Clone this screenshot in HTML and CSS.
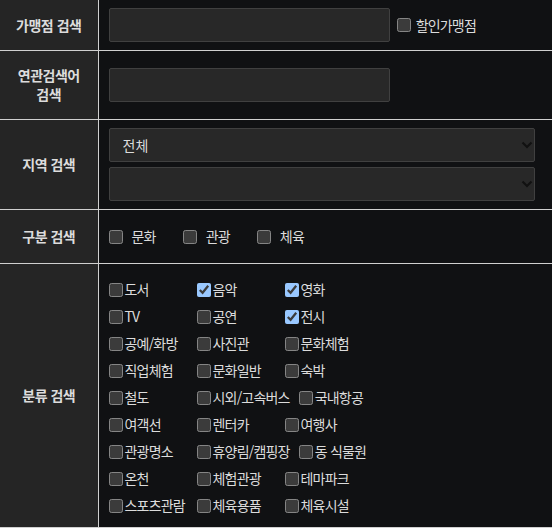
FILE: index.html
```html
<!DOCTYPE html>
<html lang="ko">
<head>
    <meta charset="UTF-8">
    <meta name="viewport" content="width=device-width, initial-scale=1.0">
    <title>가맹점 검색</title>
    <link rel="stylesheet" href="styles.css">
</head>
<body>
    <table class="search-table">
        <tr>
            <th>가맹점 검색</th>
            <td>
                <input type="text" class="text-input">
                <label class="check-inline discount">
                    <input type="checkbox"> 할인가맹점
                </label>
            </td>
        </tr>
        <tr>
            <th>연관검색어<br>검색</th>
            <td>
                <input type="text" class="text-input">
            </td>
        </tr>
        <tr>
            <th>지역 검색</th>
            <td class="region-cell">
                <div class="select-wrap">
                    <select class="select-box">
                        <option>전체</option>
                    </select>
                    <svg class="select-arrow" width="12" height="8" viewBox="0 0 12 8">
                        <path d="M1.5 1.5 L6 6 L10.5 1.5" fill="none" stroke="#111" stroke-width="2.2"/>
                    </svg>
                </div>
                <div class="select-wrap">
                    <select class="select-box">
                        <option></option>
                    </select>
                    <svg class="select-arrow" width="12" height="8" viewBox="0 0 12 8">
                        <path d="M1.5 1.5 L6 6 L10.5 1.5" fill="none" stroke="#111" stroke-width="2.2"/>
                    </svg>
                </div>
            </td>
        </tr>
        <tr>
            <th>구분 검색</th>
            <td class="type-cell">
                <div class="type-list">
                    <label class="type-item"><input type="checkbox">문화</label>
                    <label class="type-item"><input type="checkbox">관광</label>
                    <label class="type-item"><input type="checkbox">체육</label>
                </div>
            </td>
        </tr>
        <tr>
            <th>분류 검색</th>
            <td class="category-cell">
                <div class="cat-row">
                    <label class="cat-item"><input type="checkbox">도서</label>
                    <label class="cat-item"><input type="checkbox" checked>음악</label>
                    <label class="cat-item"><input type="checkbox" checked>영화</label>
                </div>
                <div class="cat-row">
                    <label class="cat-item"><input type="checkbox">TV</label>
                    <label class="cat-item"><input type="checkbox">공연</label>
                    <label class="cat-item"><input type="checkbox" checked>전시</label>
                </div>
                <div class="cat-row">
                    <label class="cat-item"><input type="checkbox">공예/화방</label>
                    <label class="cat-item"><input type="checkbox">사진관</label>
                    <label class="cat-item"><input type="checkbox">문화체험</label>
                </div>
                <div class="cat-row">
                    <label class="cat-item"><input type="checkbox">직업체험</label>
                    <label class="cat-item"><input type="checkbox">문화일반</label>
                    <label class="cat-item"><input type="checkbox">숙박</label>
                </div>
                <div class="cat-row">
                    <label class="cat-item"><input type="checkbox">철도</label>
                    <label class="cat-item"><input type="checkbox">시외/고속버스</label>
                    <label class="cat-item"><input type="checkbox">국내항공</label>
                </div>
                <div class="cat-row">
                    <label class="cat-item"><input type="checkbox">여객선</label>
                    <label class="cat-item"><input type="checkbox">렌터카</label>
                    <label class="cat-item"><input type="checkbox">여행사</label>
                </div>
                <div class="cat-row">
                    <label class="cat-item"><input type="checkbox">관광명소</label>
                    <label class="cat-item"><input type="checkbox">휴양림/캠핑장</label>
                    <label class="cat-item"><input type="checkbox">동 식물원</label>
                </div>
                <div class="cat-row">
                    <label class="cat-item"><input type="checkbox">온천</label>
                    <label class="cat-item"><input type="checkbox">체험관광</label>
                    <label class="cat-item"><input type="checkbox">테마파크</label>
                </div>
                <div class="cat-row">
                    <label class="cat-item"><input type="checkbox">스포츠관람</label>
                    <label class="cat-item"><input type="checkbox">체육용품</label>
                    <label class="cat-item"><input type="checkbox">체육시설</label>
                </div>
            </td>
        </tr>
    </table>
</body>
</html>
```

FILE: styles.css
```css
* {
    box-sizing: border-box;
    margin: 0;
    padding: 0;
}

:root {
    color-scheme: dark;
}

body {
    font-family: "Noto Sans CJK KR", "Noto Sans", sans-serif;
    font-size: 14px;
    letter-spacing: -0.8px;
    background-color: #101113;
    color: #dcdcdc;
}

.search-table {
    width: 552px;
    border-collapse: collapse;
}

.search-table th,
.search-table td {
    border-bottom: 1px solid #d0d0d0;
    vertical-align: middle;
}

.search-table th {
    width: 98px;
    padding: 15px 4px;
    background-color: #252525;
    border-right: 1px solid #d0d0d0;
    font-weight: 700;
    line-height: 19px;
    letter-spacing: -0.5px;
    text-align: center;
    color: #dcdcdc;
}

.search-table td {
    padding: 8px 10px;
    background-color: #101113;
}

input[type="checkbox"] {
    width: 14px;
    height: 14px;
    margin: 0;
    flex-shrink: 0;
}

.text-input {
    display: inline-block;
    width: 281px;
    height: 34px;
    background-color: #282828;
    border: 1px solid #404040;
    border-radius: 2px;
    color: #dcdcdc;
    font: inherit;
    padding: 0 8px;
    vertical-align: middle;
}

.check-inline {
    display: inline-flex;
    align-items: center;
    vertical-align: middle;
    margin-left: 4px;
}

.check-inline input {
    margin-right: 5px;
}

.region-cell .select-wrap + .select-wrap {
    margin-top: 5px;
}

.select-wrap {
    position: relative;
    width: 426px;
}

.select-arrow {
    position: absolute;
    right: 2px;
    top: 13px;
    pointer-events: none;
}

.select-box {
    -webkit-appearance: none;
    appearance: none;
    display: block;
    width: 100%;
    height: 34px;
    background-color: #282828;
    border: 1px solid #404040;
    border-radius: 2px;
    color: #dcdcdc;
    font: inherit;
    padding: 0 13px;
}

.search-table .type-cell {
    padding-top: 16px;
    padding-bottom: 16px;
}

.type-list {
    display: flex;
    height: 21px;
    line-height: 21px;
}

.type-item {
    display: flex;
    align-items: center;
    margin-right: 27px;
}

.type-item input {
    margin-right: 9px;
}

.category-cell {
    line-height: 27px;
}

.search-table .category-cell {
    padding-top: 12px;
    padding-bottom: 8px;
}

.cat-row {
    display: flex;
    height: 27px;
}

.cat-item {
    display: flex;
    align-items: center;
    min-width: 79px;
    margin-right: 9px;
    white-space: nowrap;
}

.cat-item input {
    margin-right: 2px;
}
```
